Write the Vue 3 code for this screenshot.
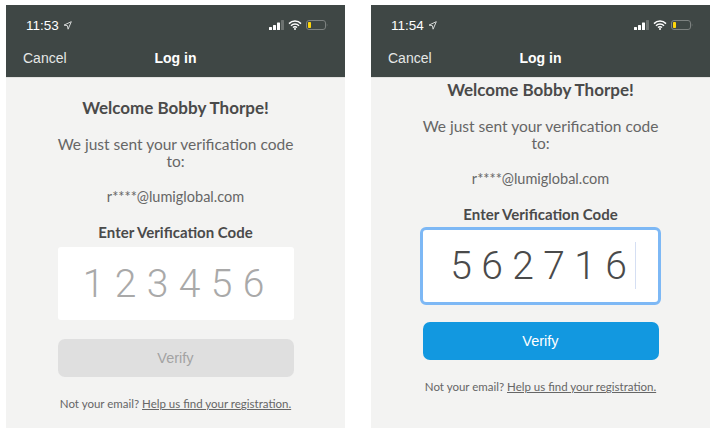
<script setup>
const phones = [
  { time: '11:53', code: '123456', focused: false },
  { time: '11:54', code: '562716', focused: true }
];
</script>

<template>
  <div class="page">
    <div v-for="phone in phones" :key="phone.time" class="phone" :class="{ focused: phone.focused }">
      <header class="top">
        <div class="status">
          <div class="clock">
            <span>{{ phone.time }}</span>
            <svg width="9" height="9" viewBox="0 0 9 9">
              <path d="M8.3.7 1 4.1l3.4.6.7 3.5z" fill="none" stroke="#d5d8d7" stroke-width="1" stroke-linejoin="round" />
            </svg>
          </div>
          <div class="icons">
            <svg width="15" height="10" viewBox="0 0 15 10">
              <rect x="0" y="7" width="3" height="3" rx=".5" fill="#fff" />
              <rect x="4" y="5" width="3" height="5" rx=".5" fill="#fff" />
              <rect x="8" y="2.5" width="3" height="7.5" rx=".5" fill="#fff" />
              <rect x="12" y="0" width="3" height="10" rx=".5" fill="#6c7270" />
            </svg>
            <svg width="14" height="10" viewBox="0 0 14 10">
              <path d="M1 3.6a8.5 8.5 0 0 1 12 0M3 5.7a5.6 5.6 0 0 1 8 0M5 7.6a2.8 2.8 0 0 1 4 0" fill="none" stroke="#fff" stroke-width="1.5" />
              <circle cx="7" cy="9" r="1" fill="#fff" />
            </svg>
            <svg width="22" height="10" viewBox="0 0 22 10">
              <rect x=".5" y=".5" width="19" height="9" rx="2.5" fill="none" stroke="#7d8280" />
              <rect x="2" y="2" width="3" height="6" rx=".8" fill="#ffd60a" />
              <path d="M20.8 3.5c.7.3.7 2.700 0 3z" fill="#7d8280" />
            </svg>
          </div>
        </div>
        <nav class="nav">
          <span class="cancel">Cancel</span>
          <span class="title">Log in</span>
        </nav>
      </header>

      <main class="body">
        <h1>Welcome Bobby Thorpe!</h1>
        <p class="sent">We just sent your verification code to:</p>
        <p class="email">r****@lumiglobal.com</p>
        <h2>Enter Verification Code</h2>
        <div class="code">
          <span v-for="(digit, i) in phone.code" :key="i">{{ digit }}</span>
          <i v-if="phone.focused" class="caret"></i>
        </div>
        <button class="verify" type="button">Verify</button>
        <p class="help">Not your email? <u>Help us find your registration.</u></p>
      </main>
    </div>
  </div>
</template>

<style>
html, body {
  background: #fff;
}
</style>

<style scoped>
.page {
  display: flex;
  gap: 26px;
  width: 719px;
  height: 428px;
  box-sizing: border-box;
  padding: 5px 9px 0 6px;
  overflow: hidden;
  font-family: Lato, sans-serif;
}

.phone {
  width: 339px;
  height: 423px;
  flex: none;
  background: #f3f3f2;
}

.top {
  height: 72px;
  background: #3f4745;
  border-bottom: 1px solid #e2e2e0;
  box-sizing: content-box;
}

.status {
  height: 34px;
  padding: 0 17px 0 20px;
  display: flex;
  align-items: center;
  justify-content: space-between;
  padding-top: 6px;
  box-sizing: border-box;
}

.clock {
  display: flex;
  align-items: center;
  gap: 4px;
  font-family: "Liberation Sans", sans-serif;
  font-size: 13.500px;
  color: #fff;
}

.icons {
  display: flex;
  align-items: center;
  gap: 4px;
}

.nav {
  position: relative;
  height: 38px;
  display: flex;
  align-items: center;
  justify-content: center;
  font-family: "Liberation Sans", sans-serif;
  font-size: 14px;
  padding-bottom: 1px;
  box-sizing: border-box;
}

.cancel {
  position: absolute;
  left: 17px;
  color: #e6e8e7;
}

.title {
  font-weight: 700;
  color: #fff;
}

.body {
  display: flex;
  flex-direction: column;
  align-items: center;
  padding-top: 19px;
  color: #666;
}

.focused .body {
  padding-top: 1px;
}

h1 {
  margin: 0;
  font-size: 17px;
  line-height: 22px;
  font-weight: 700;
  color: #4a4a4a;
}

.sent {
  width: 240px;
  margin: 17px 0 0;
  font-size: 15.500px;
  line-height: 17px;
  text-align: center;
}

.email {
  margin: 18px 0 0;
  font-size: 14.500px;
  line-height: 18px;
}

h2 {
  margin: 17px 0 0;
  font-size: 15px;
  line-height: 19px;
  font-weight: 700;
  color: #4a4a4a;
}

.code {
  position: relative;
  width: 236px;
  height: 73px;
  margin-top: 5px;
  padding-right: 4px;
  box-sizing: border-box;
  display: flex;
  align-items: center;
  justify-content: center;
  gap: 8px;
  background: #fff;
  border-radius: 3px;
  font-family: Roboto, sans-serif;
  font-size: 39px;
  font-weight: 300;
  color: #a9a9a9;
}

.code span {
  width: 24px;
  text-align: center;
}

.focused .code {
  width: 241px;
  height: 78px;
  margin-top: 3px;
  border: 3px solid #7db8f5;
  border-radius: 6px;
  color: #4a4a4a;
  gap: 7px;
}

.caret {
  position: absolute;
  right: 22px;
  top: 12px;
  bottom: 13px;
  width: 1px;
  background: #d5dff3;
}

.verify {
  width: 236px;
  height: 38px;
  margin-top: 19px;
  padding: 0;
  border: 0;
  border-radius: 7px;
  background: #dfdfdf;
  color: #a3a3a3;
  font-family: "Liberation Sans", sans-serif;
  font-size: 14.500px;
}

.focused .verify {
  margin-top: 17px;
  background: #1298e0;
  color: #fff;
}

.help {
  margin: 19px 0 0;
  font-size: 11.500px;
  line-height: 15px;
  color: #666;
}

.help u {
  text-underline-offset: 1px;
}
</style>
